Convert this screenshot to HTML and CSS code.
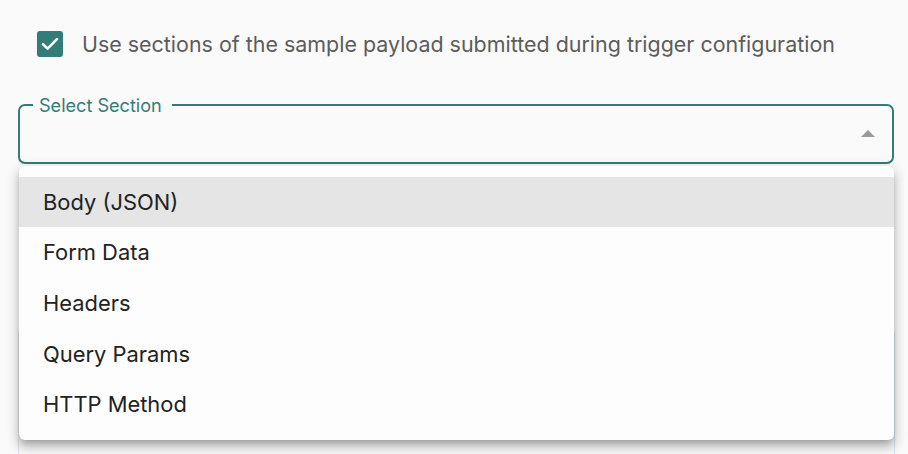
FILE: index.html
```html
<!DOCTYPE html>
<html>
<head>
<meta charset="utf-8">
<link rel="stylesheet" href="styles.css">
</head>
<body>
<div class="page">
  <label class="check-row">
    <span class="checkbox">
      <svg width="18" height="14" viewBox="0 0 18 14"><path d="M2 7.2 L6.6 11.6 L16 2.2" fill="none" stroke="#fff" stroke-width="2.6" stroke-linecap="round" stroke-linejoin="round"/></svg>
    </span>
    <span class="check-label">Use sections of the sample payload submitted during trigger configuration</span>
  </label>

  <div class="field">
    <fieldset class="outline">
      <legend class="legend">Select Section</legend>
    </fieldset>
    <span class="arrow"></span>
  </div>

  <div class="under-box"></div>

  <ul class="menu">
    <li class="item active">Body (JSON)</li>
    <li class="item">Form Data</li>
    <li class="item">Headers</li>
    <li class="item">Query Params</li>
    <li class="item">HTTP Method</li>
  </ul>
</div>
</body>
</html>
```

FILE: styles.css
```css
html, body {
  margin: 0;
  padding: 0;
  background: #fafafa;
  font-family: Inter, "Noto Sans", sans-serif;
  overflow: hidden;
}
.page {
  position: relative;
  width: 908px;
  height: 454px;
  overflow: hidden;
}
.check-row {
  display: flex;
  align-items: center;
  padding: 30px 0 0 37px;
  height: 27px;
}
.checkbox {
  width: 26px;
  height: 26px;
  border-radius: 3px;
  background: #347c79;
  display: flex;
  align-items: center;
  justify-content: center;
}
.check-label {
  margin-left: 19px;
  font-size: 21.45px;
  color: #5c5c5c;
}
.field {
  position: relative;
  margin: 39px 14px 0 18px;
  height: 68px;
}
.outline {
  position: absolute;
  inset: 0;
  margin: 0;
  padding: 0 13px;
  border: 2px solid #347c79;
  border-radius: 7px;
}
.legend {
  padding: 0 10px 0 6px;
  margin-left: 0;
  font-size: 18.1px;
  line-height: 18px;
  color: #347c79;
}
.arrow {
  position: absolute;
  right: 19px;
  top: 34px;
  width: 0;
  height: 0;
  border-left: 7.5px solid transparent;
  border-right: 7.5px solid transparent;
  border-bottom: 7px solid #9a9a9a;
}
.under-box {
  position: absolute;
  left: 18px;
  top: 328px;
  width: 875px;
  height: 200px;
  border: 1px solid #dbe1ec;
  border-radius: 6px;
  background: #fafafa;
}
.menu {
  position: absolute;
  left: 19px;
  top: 166px;
  width: 875px;
  margin: 0;
  padding: 11px 0 10px;
  list-style: none;
  background: #fdfdfd;
  border-radius: 6px;
  box-shadow: 0 5px 6px -3px rgba(0,0,0,0.2), 0 8px 10px 1px rgba(0,0,0,0.14), 0 3px 14px 2px rgba(0,0,0,0.12);
}
.item {
  height: 50.7px;
  display: flex;
  align-items: center;
  padding-left: 24px;
  font-size: 21.9px;
  color: #222;
}
.item.active {
  background: #e4e5e4;
  height: 50px;
}
```
